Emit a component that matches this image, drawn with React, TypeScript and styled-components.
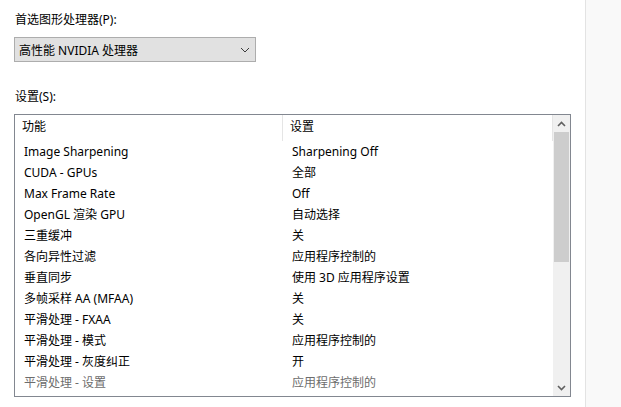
import React from "react";
import styled, { createGlobalStyle } from "styled-components";

const Global = createGlobalStyle`
  html, body { margin: 0; padding: 0; background: #fff; }
  body { font-family: "Noto Sans", "Noto Sans CJK SC", sans-serif; font-size: 12px; color: #000; }
`;

const Page = styled.div`
  display: flex;
  width: 621px;
  height: 407px;
  overflow: hidden;
`;

const Main = styled.div`
  width: 585px;
  box-sizing: border-box;
  padding: 8px 0 0 14px;
  display: flex;
  flex-direction: column;
`;

const Side = styled.div`
  flex: 1;
  border-left: 1px solid #e3e3e3;
  background: #f9f9f9;
`;

const Label = styled.div<{ $mt?: number }>`
  height: 23px;
  line-height: 23px;
  padding-left: 1px;
  margin-top: ${(p) => p.$mt ?? 0}px;
`;

const Select = styled.div`
  margin-top: 6px;
  width: 242px;
  height: 25px;
  box-sizing: border-box;
  border: 1px solid #adadad;
  background: #e1e1e1;
  display: flex;
  align-items: center;
  justify-content: space-between;
  padding: 0 5px 0 4px;
`;

const ListBox = styled.div`
  margin-top: 6px;
  width: 557px;
  height: 283px;
  box-sizing: border-box;
  border: 1px solid #828790;
  display: flex;
  background: #fff;
`;

const Table = styled.div`
  flex: 1;
  display: flex;
  flex-direction: column;
  overflow: hidden;
`;

const HeaderRow = styled.div`
  display: grid;
  grid-template-columns: 268px 1fr;
  height: 26px;
  flex-shrink: 0;
  border-right: 1px solid #e5e5e5;
`;

const HeaderCell = styled.div<{ $sep?: boolean }>`
  padding-left: 7px;
  line-height: 24px;
  border-right: ${(p) => (p.$sep ? "1px solid #e5e5e5" : "none")};
`;

const Row = styled.div<{ $dim?: boolean }>`
  display: grid;
  grid-template-columns: 268px 1fr;
  height: 21px;
  line-height: 21px;
  flex-shrink: 0;
  color: ${(p) => (p.$dim ? "#6d6d6d" : "#000")};
`;

const Cell = styled.div<{ $pl: number }>`
  padding-left: ${(p) => p.$pl}px;
  white-space: nowrap;
`;

const Scrollbar = styled.div`
  width: 17px;
  background: #f0f0f0;
  display: flex;
  flex-direction: column;
`;

const ArrowBtn = styled.div`
  height: 17px;
  display: flex;
  align-items: center;
  justify-content: center;
  flex-shrink: 0;
`;

const Thumb = styled.div`
  height: 130px;
  margin: 0 1px;
  background: #cdcdcd;
`;

const Track = styled.div`
  flex: 1;
`;

const Chevron = ({ up, thin }: { up?: boolean; thin?: boolean }) => (
  <svg width={thin ? 10 : 9} height={6} viewBox={thin ? "0 0 10 6" : "0 0 9 6"}>
    <path
      d={
        thin
          ? "M1 1 L5 5 L9 1"
          : up
          ? "M1 5 L4.5 1.5 L8 5"
          : "M1 1 L4.5 4.5 L8 1"
      }
      fill="none"
      stroke={thin ? "#3c3c3c" : "#606060"}
      strokeWidth={thin ? 1 : 1.6}
    />
  </svg>
);

const rows: [string, string][] = [
  ["Image Sharpening", "Sharpening Off"],
  ["CUDA - GPUs", "全部"],
  ["Max Frame Rate", "Off"],
  ["OpenGL 渲染 GPU", "自动选择"],
  ["三重缓冲", "关"],
  ["各向异性过滤", "应用程序控制的"],
  ["垂直同步", "使用 3D 应用程序设置"],
  ["多帧采样 AA (MFAA)", "关"],
  ["平滑处理 - FXAA", "关"],
  ["平滑处理 - 模式", "应用程序控制的"],
  ["平滑处理 - 灰度纠正", "开"],
  ["平滑处理 - 设置", "应用程序控制的"],
];

export default function App() {
  return (
    <Page>
      <Global />
      <Main>
        <Label>首选图形处理器(P):</Label>
        <Select>
          <span>高性能 NVIDIA 处理器</span>
          <Chevron thin />
        </Select>
        <Label $mt={23}>设置(S):</Label>
        <ListBox>
          <Table>
            <HeaderRow>
              <HeaderCell $sep>功能</HeaderCell>
              <HeaderCell>设置</HeaderCell>
            </HeaderRow>
            {rows.map(([a, b], i) => (
              <Row key={a} $dim={i === rows.length - 1}>
                <Cell $pl={9}>{a}</Cell>
                <Cell $pl={9}>{b}</Cell>
              </Row>
            ))}
          </Table>
          <Scrollbar>
            <ArrowBtn>
              <Chevron up />
            </ArrowBtn>
            <Thumb />
            <Track />
            <ArrowBtn>
              <Chevron />
            </ArrowBtn>
          </Scrollbar>
        </ListBox>
      </Main>
      <Side />
    </Page>
  );
}
